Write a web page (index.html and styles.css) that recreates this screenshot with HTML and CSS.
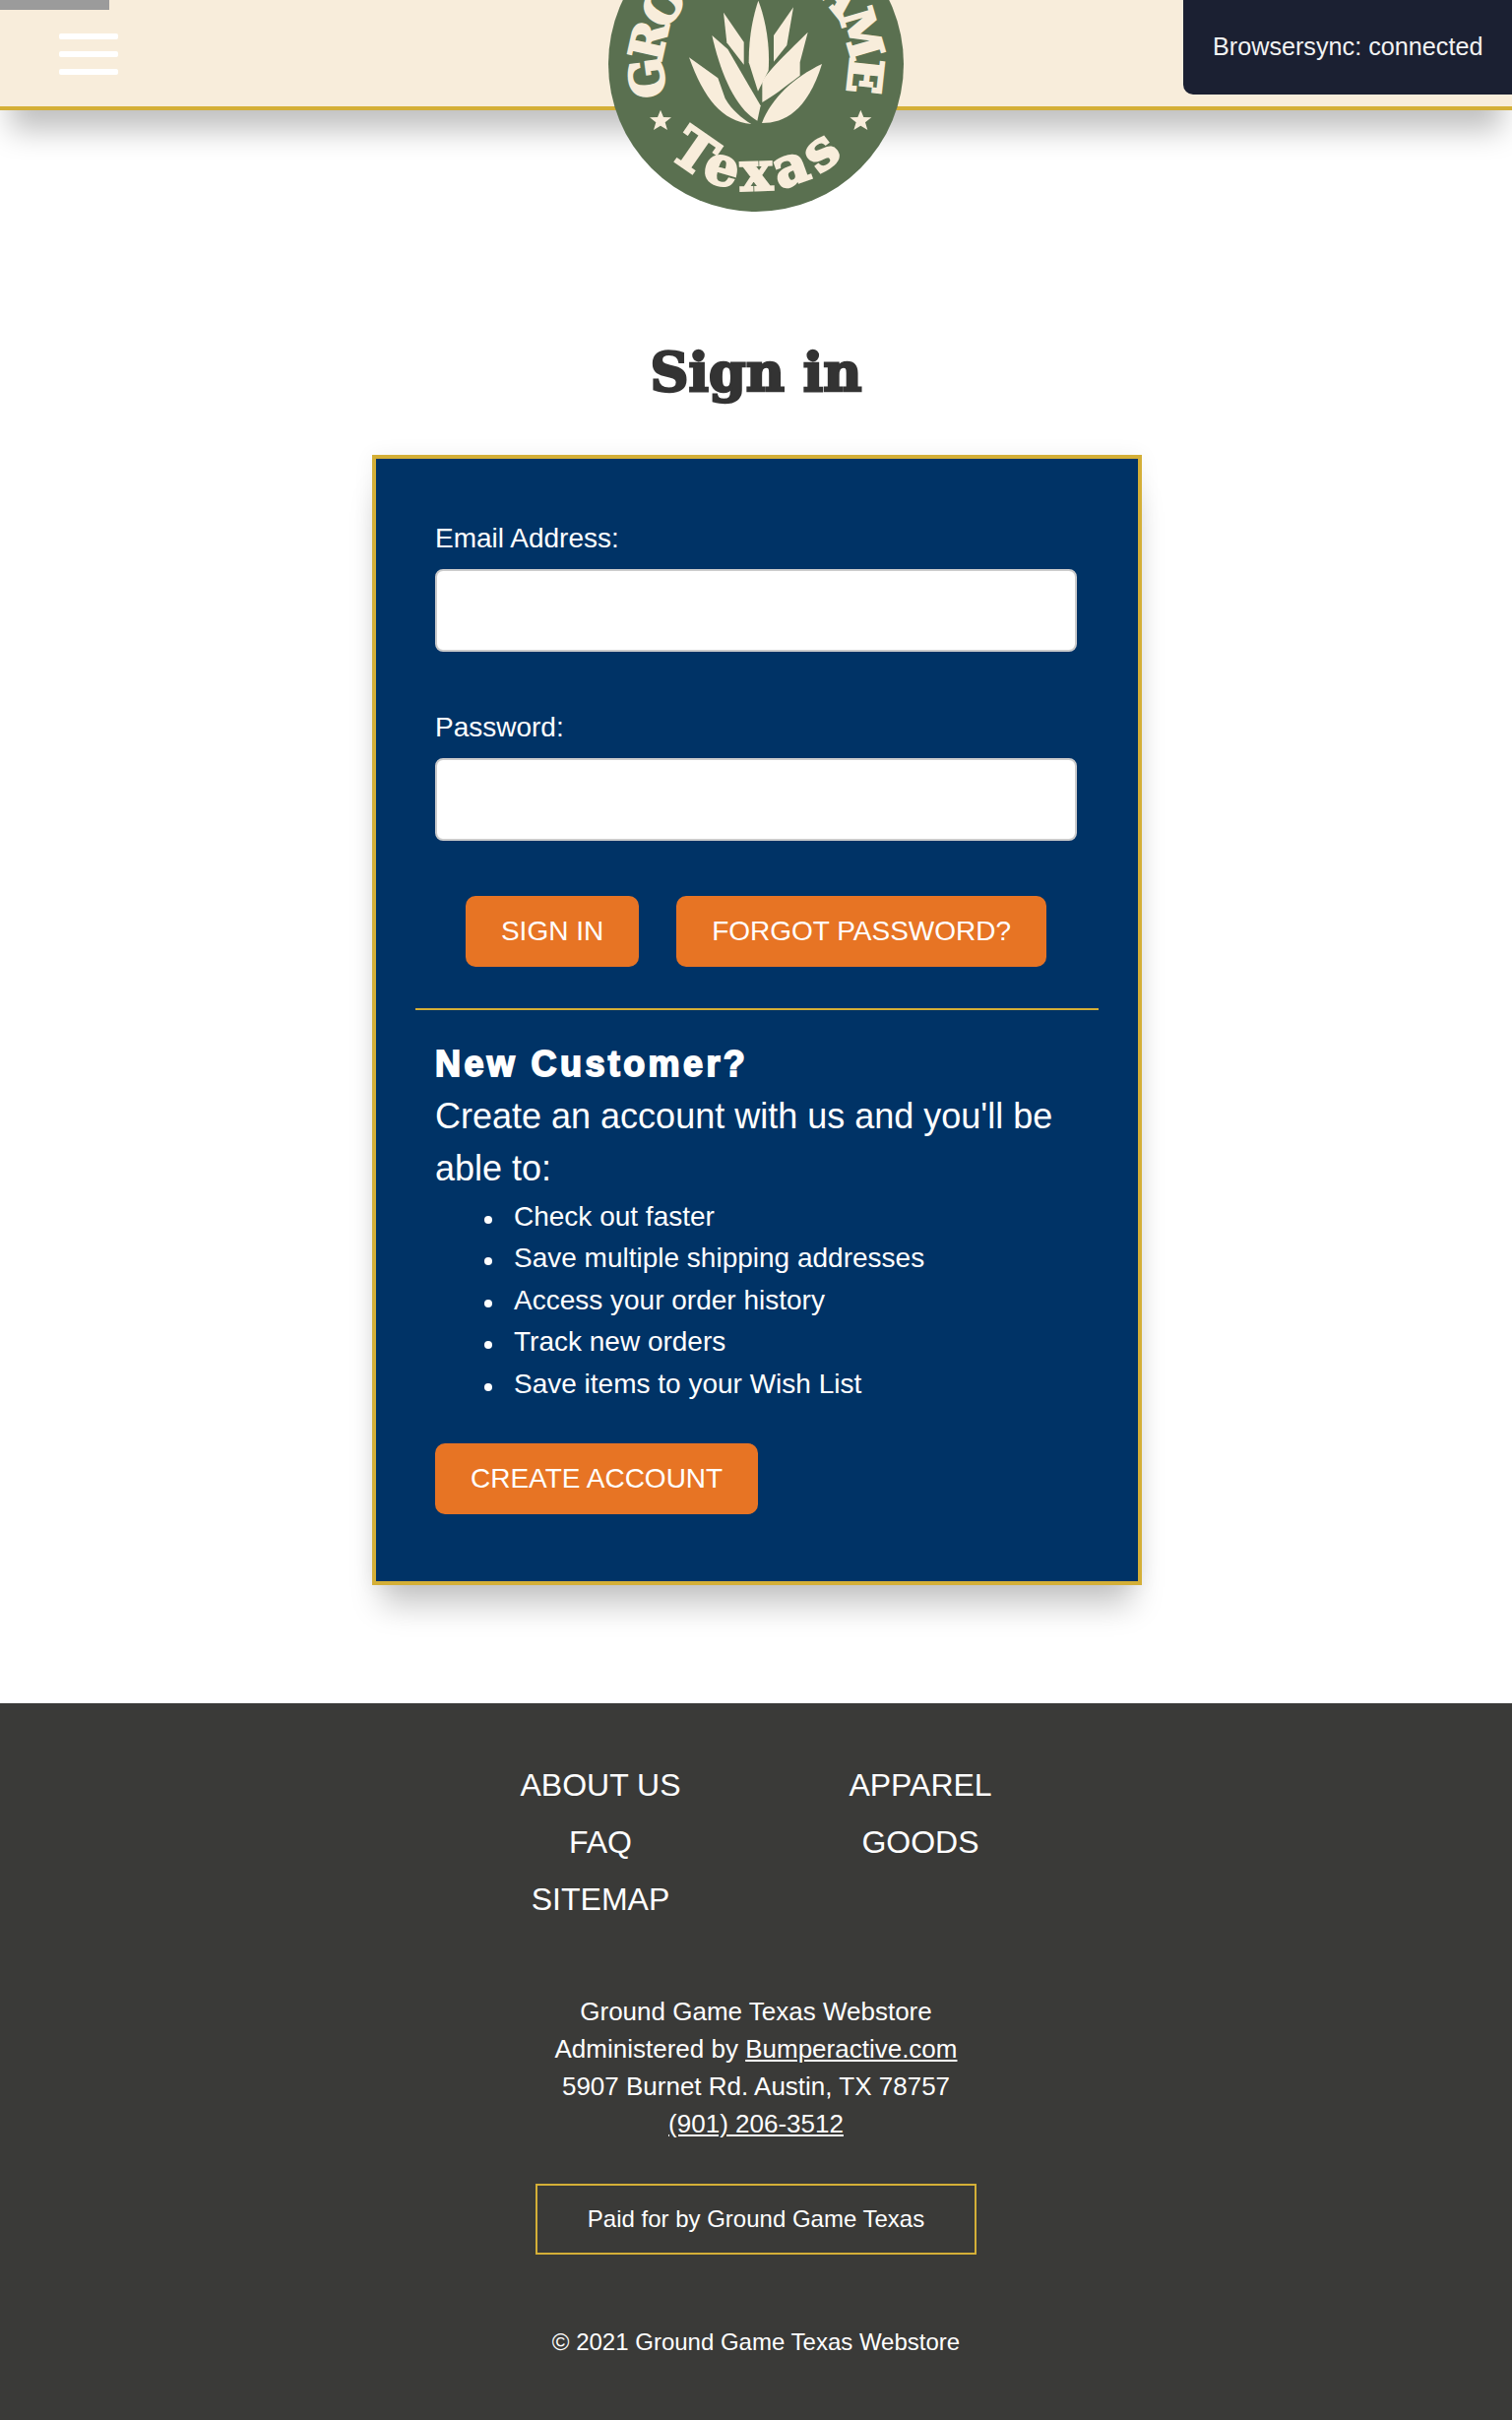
FILE: index.html
```html
<!DOCTYPE html>
<html lang="en">
<head>
  <meta charset="UTF-8">
  <meta name="viewport" content="width=device-width, initial-scale=1.0">
  <title>Sign in - Ground Game Texas Webstore</title>
  <link rel="stylesheet" href="styles.css">
</head>
<body>
  <div class="loader-bar"></div>
  <header class="site-header">
    <button class="menu-toggle" aria-label="Menu">
      <span></span><span></span><span></span>
    </button>
    <a class="logo" href="#" aria-label="Ground Game Texas">
      <svg viewBox="84 -255 900 900" width="300" height="300">
        <defs>
          <path id="arc-top" d="M265 290 A285 285 0 1 1 803 290"/>
          <path id="arc-bottom" d="M200 386 A385 385 0 0 0 868 386"/>
        </defs>
        <circle cx="534" cy="195" r="450" fill="#5a7050"/>
        <g fill="#f8eddb">
          <text class="logo-text logo-top"><textPath href="#arc-top" textLength="1075" lengthAdjust="spacing">GROUND GAME</textPath></text>
          <text class="logo-text logo-bottom"><textPath href="#arc-bottom" startOffset="51%" text-anchor="middle">Texas</textPath></text>
          <!-- agave -->
          <path d="M541 2C525 50 512 110 512 190L540 278L572 215C578 130 560 50 541 2Z"/>
          <path d="M435 38L497 128L497 197L445 130Z"/>
          <path d="M648 22L588 108L588 188L628 138Z"/>
          <path d="M400 108L448 150L548 322L538 368C470 330 425 220 400 108Z"/>
          <path d="M692 98C640 150 565 220 553 250L553 312C590 290 615 270 668 230L668 190Z"/>
          <path d="M735 195C650 235 580 300 552 375C620 375 690 340 735 195Z"/>
          <path d="M330 175L418 238L440 300C460 335 490 360 520 378C430 370 375 300 330 175Z"/>
          <polygon points="243,335 252,357 276,358 257,373 264,396 243,383 222,396 229,373 210,358 234,357"/>
          <polygon points="853,335 862,357 886,358 867,373 874,396 853,383 832,396 839,373 820,358 844,357"/>
        </g>
      </svg>
    </a>
  </header>
  <div class="bs-notify">Browsersync: connected</div>

  <main class="content">
    <h1 class="page-title">Sign in</h1>
    <div class="login-card">
      <form class="login-form">
        <div class="field">
          <label for="email">Email Address:</label>
          <input type="text" id="email">
        </div>
        <div class="field">
          <label for="password">Password:</label>
          <input type="password" id="password">
        </div>
        <div class="form-actions">
          <a class="button" href="#">SIGN IN</a>
          <a class="button" href="#">FORGOT PASSWORD?</a>
        </div>
      </form>
      <hr class="divider">
      <div class="new-customer">
        <h2>New Customer?</h2>
        <p>Create an account with us and you'll be able to:</p>
        <ul>
          <li>Check out faster</li>
          <li>Save multiple shipping addresses</li>
          <li>Access your order history</li>
          <li>Track new orders</li>
          <li>Save items to your Wish List</li>
        </ul>
        <a class="button" href="#">CREATE ACCOUNT</a>
      </div>
    </div>
  </main>

  <footer class="site-footer">
    <div class="footer-links">
      <div class="footer-col">
        <a href="#">ABOUT US</a>
        <a href="#">FAQ</a>
        <a href="#">SITEMAP</a>
      </div>
      <div class="footer-col">
        <a href="#">APPAREL</a>
        <a href="#">GOODS</a>
      </div>
    </div>
    <address class="footer-address">
      Ground Game Texas Webstore<br>
      Administered by <a href="#">Bumperactive.com</a><br>
      5907 Burnet Rd. Austin, TX 78757<br>
      <a href="#">(901) 206-3512</a>
    </address>
    <div class="paid-for">Paid for by Ground Game Texas</div>
    <div class="copyright">© 2021 Ground Game Texas Webstore</div>
  </footer>
</body>
</html>
```

FILE: styles.css
```css
* { box-sizing: border-box; }
body { font-family: "Liberation Sans", Arial, sans-serif; background: #fff; color: #fff; margin: 0; overflow-x: hidden; }
a { color: inherit; }

.loader-bar { position: absolute; top: 0; left: 0; width: 111px; height: 10px; background: #9b9b9b; z-index: 5; }

.site-header { position: relative; height: 112px; padding: 34px 0 0 60px; background: #f8eddb; border-bottom: 4px solid #d4af37; box-shadow: 0 30px 30px -10px rgba(0,0,0,0.25); }
.menu-toggle { display: flex; flex-direction: column; gap: 12px; width: 60px; padding: 0; background: none; border: none; }
.menu-toggle span { display: block; height: 6px; background: #fff; border-radius: 2px; }
.logo { position: absolute; top: -85px; left: 618px; width: 300px; height: 300px; }
.logo svg { display: block; }
.logo-text { font-family: "DejaVu Serif", serif; font-weight: bold; stroke: #f8eddb; }
.logo-top { font-size: 140px; stroke-width: 8px; }
.logo-bottom { font-size: 165px; stroke-width: 7px; letter-spacing: 20px; }

.bs-notify { position: absolute; top: 0; right: 0; width: 334px; height: 96px; padding-top: 31px; padding-left: 30px; background: #1b2032; color: #f2f2f2; font-size: 25.2px; line-height: 32px; border-bottom-left-radius: 10px; z-index: 6; }

.content { padding: 242px 0 120px 2px; }
.page-title { margin: 0 0 60px -2px; color: #333; font-family: "DejaVu Serif", serif; font-size: 54px; line-height: 48px; font-weight: bold; text-align: center; -webkit-text-stroke: 2.5px #333; }

.login-card { width: 782px; margin: 0 auto; padding: 65px 62px 68px 60px; background: #003366; border: 4px solid #d4af37; box-shadow: 0 30px 30px -10px rgba(0,0,0,0.22), 0 0 20px rgba(0,0,0,0.06); }

.field { margin-bottom: 61px; }
.field label { display: block; margin-bottom: 15px; font-size: 28px; line-height: 32px; }
.field input { display: block; width: 100%; height: 84px; background: #fff; border: 2px solid #ccc; border-radius: 8px; }
.form-actions { display: flex; justify-content: center; gap: 38px; margin-top: -5px; }

.button { display: inline-block; height: 72px; padding: 0 36px; background: #e77424; color: #fff; font-size: 28px; line-height: 72px; text-decoration: none; border-radius: 10px; }

.divider { height: 2px; margin: 42px -22px 0 -20px; background: #d4af37; border: none; }

.new-customer { padding-top: 36px; }
.new-customer h2 { margin: 0 0 7px; font-size: 36px; line-height: 38px; font-weight: bold; letter-spacing: 3.4px; -webkit-text-stroke: 1.8px #fff; }
.new-customer p { margin: 0; font-size: 36px; line-height: 53px; }
.new-customer ul { margin: 2px 0 39px; padding-left: 80px; list-style: none; }
.new-customer li { position: relative; font-size: 28px; line-height: 42.4px; }
.new-customer li::before { content: ""; position: absolute; top: 20px; left: -30px; width: 8px; height: 8px; background: #fff; border-radius: 50%; }

.site-footer { height: 728px; padding-top: 54px; background: #3a3a38; text-align: center; }
.footer-links { display: flex; justify-content: center; padding-left: 9px; }
.footer-col { width: 325px; }
.footer-col a { display: block; font-size: 32px; line-height: 58px; text-decoration: none; }
.footer-address { margin-top: 66px; font-size: 26px; font-style: normal; line-height: 38px; }
.paid-for { width: 448px; height: 72px; margin: 42px auto 0; border: 2px solid #d4af37; font-size: 24px; line-height: 68px; }
.copyright { margin-top: 73px; font-size: 24px; line-height: 32px; }
```
